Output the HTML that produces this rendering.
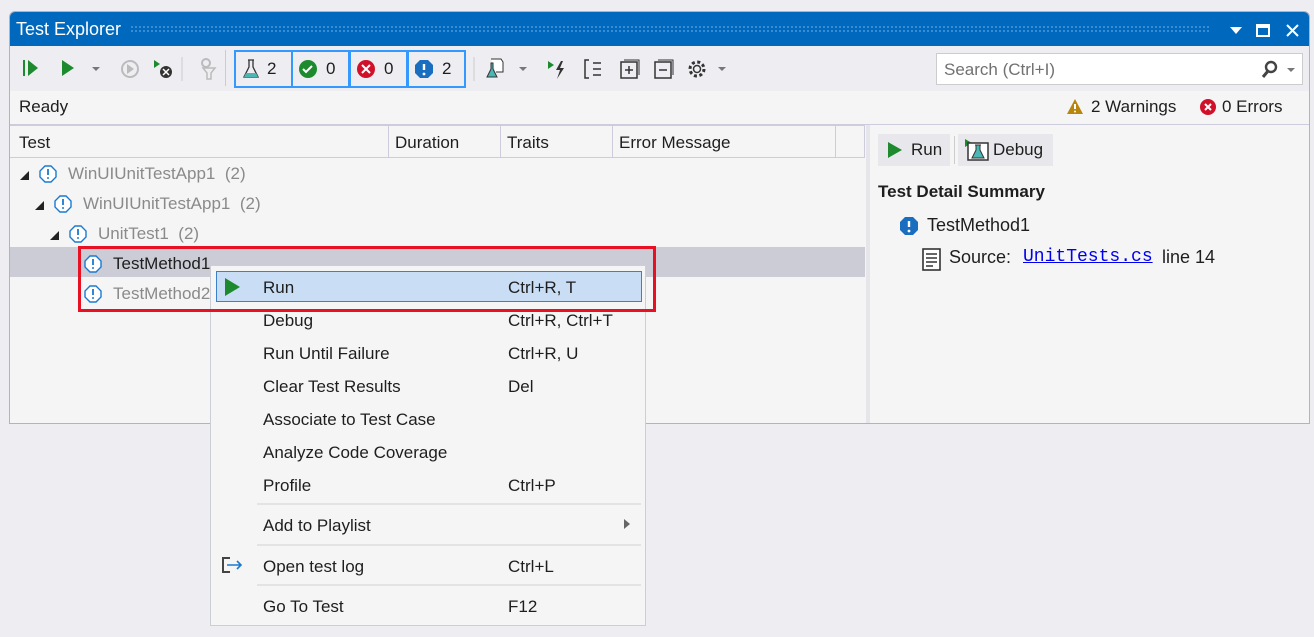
<!DOCTYPE html>
<html><head><meta charset="utf-8"><style>
*{margin:0;padding:0;box-sizing:border-box}
body{width:1314px;height:637px;background:#eeeef2;font-family:"Liberation Sans",sans-serif;font-size:17px;color:#1e1e1e;position:relative;overflow:hidden}
.a{position:absolute;white-space:nowrap}
.win{position:absolute;left:9px;top:11px;width:1301px;height:413px;border:1px solid #aeb4c3;border-radius:6px 6px 0 0;background:#f5f5f5;overflow:hidden}
.title{position:absolute;left:0;top:0;width:100%;height:34px;background:#0068bd;color:#fff}
.dots{position:absolute;left:120px;top:13px;width:1080px;height:8px;background-image:radial-gradient(#3c8fd4 1px,transparent 1.2px);background-size:4px 4px}
.tb{position:absolute;left:0;top:34px;width:100%;height:45px;background:#eeeef2}
.badge{position:absolute;top:38px;height:38px;border:2px solid #3399ff;width:59px}
.hdr{position:absolute;top:113px;left:0;width:855px;height:33px;border-bottom:1px solid #ccd;border-top:1px solid #ccd}
.vs{position:absolute;top:0;width:1px;height:32px;background:#ccd}
.g{color:#8a8a8a}
.menu{position:absolute;left:210px;top:265px;width:436px;height:361px;background:#f5f5f5;border:1px solid #ccced6}
.mi{position:absolute;left:52px}
.sc{position:absolute;left:297px}
.sep{position:absolute;left:46px;width:384px;height:2px;background:#e3e3e6}
</style></head><body>
<div class="win">
 <div class="title"><span class="a" style="left:6px;top:7px;font-size:18px">Test Explorer</span><div class="dots"></div>
  <svg class="a" style="left:1215px;top:12px" width="80" height="14"><path d="M5 3h12l-6 7z" fill="#fff"/><rect x="32" y="1" width="12" height="11" fill="none" stroke="#fff" stroke-width="2"/><rect x="32" y="1" width="12" height="3" fill="#fff"/><path d="M62 1l11 11M73 1l-11 11" stroke="#fff" stroke-width="2"/></svg>
 </div>
 <div class="tb">
  <svg class="a" style="left:10px;top:11px" width="220" height="24">
   <path d="M4 3v16" stroke="#1e8a2e" stroke-width="2"/><path d="M8 3l10 8-10 8z" fill="#1e8a2e"/>
   <path d="M42 3l12 8-12 8z" fill="#1e8a2e"/><path d="M72 10h8l-4 4z" fill="#777"/>
   <circle cx="110" cy="12" r="8" fill="none" stroke="#bbb" stroke-width="2"/><path d="M107 7l7 5-7 5z" fill="#bbb"/>
   <path d="M134 3l6 4-6 4z" fill="#1e8a2e"/><circle cx="146" cy="15" r="6" fill="#333"/><path d="M143 12l6 6M149 12l-6 6" stroke="#fff" stroke-width="1.5"/>
   <path d="M162 0v24" stroke="#ccc"/><circle cx="186" cy="6" r="4" fill="none" stroke="#bbb" stroke-width="2"/><path d="M183 11h12l-4 5v6h-4v-6z" fill="none" stroke="#bbb" stroke-width="1.5"/>
  </svg>
  <div class="a" style="left:215px;top:4px;width:1px;height:36px;background:#ccc"></div>
 </div>
 <div class="badge" style="left:224px"><svg class="a" style="left:7px;top:6px" width="16" height="22"><path d="M5 2h6M6 2v7L1 19h14L10 9V2" fill="none" stroke="#333" stroke-width="1.3"/><path d="M3 15h10l2 4H1z" fill="#4bb7b4"/></svg><span class="a" style="left:31px;top:7px">2</span></div>
 <div class="badge" style="left:281px"><svg class="a" style="left:5px;top:7px" width="20" height="20"><circle cx="10" cy="10" r="9" fill="#1e8a2e"/><path d="M5 10l3 3 6-6" stroke="#fff" stroke-width="2" fill="none"/></svg><span class="a" style="left:33px;top:7px">0</span></div>
 <div class="badge" style="left:339px"><svg class="a" style="left:5px;top:7px" width="20" height="20"><circle cx="10" cy="10" r="9" fill="#d1112a"/><path d="M6 6l8 8M14 6l-8 8" stroke="#fff" stroke-width="2"/></svg><span class="a" style="left:33px;top:7px">0</span></div>
 <div class="badge" style="left:397px"><svg class="a" style="left:5px;top:7px" width="20" height="20"><path d="M6 1h8l5 5v8l-5 5H6l-5-5V6z" fill="#1a6ec0"/><path d="M10 5v6" stroke="#fff" stroke-width="2.4"/><circle cx="10" cy="15" r="1.4" fill="#fff"/></svg><span class="a" style="left:33px;top:7px">2</span></div>
 <svg class="a" style="left:463px;top:45px" width="260" height="24">
  <path d="M1 0v24" stroke="#ccc"/>
  <path d="M18 2h10l2 3v10h-7" fill="#fff" stroke="#333"/><path d="M18 6v6l-4 8h10l-4-8V6z" fill="#4bb7b4" stroke="#333"/><path d="M46 10h8l-4 4z" fill="#777"/>
  <path d="M75 4l6 4-6 4z" fill="#1e8a2e"/><path d="M88 4l-5 9h4l-3 9 7-11h-4l3-7z" fill="#333"/>
  <path d="M116 3h-4v18h4M120 6h8M120 12h8M120 18h8" stroke="#333" stroke-width="1.5" fill="none"/>
  <rect x="148" y="5" width="16" height="16" fill="none" stroke="#333" stroke-width="1.5"/><path d="M151 3h15v15" stroke="#333" fill="none"/><path d="M156 9v8M152 13h8" stroke="#333" stroke-width="1.5"/>
  <rect x="182" y="5" width="16" height="16" fill="none" stroke="#333" stroke-width="1.5"/><path d="M185 3h15v15" stroke="#333" fill="none"/><path d="M186 13h8" stroke="#333" stroke-width="1.5"/>
  <circle cx="224" cy="12" r="7" fill="none" stroke="#333" stroke-width="3" stroke-dasharray="3 2.5"/><circle cx="224" cy="12" r="3.5" fill="none" stroke="#333" stroke-width="1.5"/>
  <path d="M245 10h8l-4 4z" fill="#777"/>
 </svg>
 <div class="a" style="left:926px;top:41px;width:367px;height:32px;background:#fff;border:1px solid #ccc"><span class="a" style="left:7px;top:6px;color:#717171">Search (Ctrl+I)</span>
  <svg class="a" style="left:324px;top:6px" width="40" height="20"><circle cx="10" cy="7" r="5" fill="none" stroke="#444" stroke-width="2.4"/><path d="M7 11l-5 6" stroke="#444" stroke-width="3"/><path d="M26 8h8l-4 4z" fill="#777"/></svg></div>
 <span class="a" style="left:9px;top:85px">Ready</span>
 <svg class="a" style="left:1056px;top:86px" width="20" height="18"><path d="M9 1l8 15H1z" fill="#b8860b"/><path d="M9 6v5" stroke="#fff" stroke-width="2"/><circle cx="9" cy="13.5" r="1" fill="#fff"/></svg>
 <span class="a" style="left:1081px;top:85px">2 Warnings</span>
 <svg class="a" style="left:1189px;top:86px" width="18" height="18"><circle cx="9" cy="9" r="8" fill="#d1112a"/><path d="M6 6l6 6M12 6l-6 6" stroke="#fff" stroke-width="2"/></svg>
 <span class="a" style="left:1212px;top:85px">0 Errors</span>
 <div class="a" style="left:0;top:112px;width:100%;height:1px;background:#ccd"></div>
 <div class="hdr"><span class="a" style="left:9px;top:7px">Test</span>
  <div class="vs" style="left:378px"></div><span class="a" style="left:385px;top:7px">Duration</span>
  <div class="vs" style="left:490px"></div><span class="a" style="left:497px;top:7px">Traits</span>
  <div class="vs" style="left:602px"></div><span class="a" style="left:609px;top:7px">Error Message</span>
  <div class="vs" style="left:825px"></div><div class="vs" style="left:854px"></div></div>
 <div class="a" style="left:856px;top:113px;width:4px;height:300px;background:#e6e6ea"></div>
 <div class="a" style="left:0;top:235px;width:855px;height:30px;background:#ccccd6"></div>
 <svg class="a" style="left:0;top:150px" width="220" height="150">
  <defs><g id="i"><path d="M5 0h6l5 5v6l-5 5H5L0 11V5z" fill="#fff" stroke="#1a7ad0" stroke-width="1.4"/><path d="M8 3v6" stroke="#1a7ad0" stroke-width="1.8"/><circle cx="8" cy="12" r="1" fill="#1a7ad0"/></g></defs>
  <path d="M10 18l9-9v9z" fill="#222"/><use href="#i" x="30" y="4"/>
  <path d="M25 48l9-9v9z" fill="#222"/><use href="#i" x="45" y="34"/>
  <path d="M40 78l9-9v9z" fill="#222"/><use href="#i" x="60" y="64"/>
  <use href="#i" x="75" y="94"/><use href="#i" x="75" y="124"/>
 </svg>
 <span class="a g" style="left:58px;top:152px">WinUIUnitTestApp1&nbsp; (2)</span>
 <span class="a g" style="left:73px;top:182px">WinUIUnitTestApp1&nbsp; (2)</span>
 <span class="a g" style="left:88px;top:212px">UnitTest1&nbsp; (2)</span>
 <span class="a" style="left:103px;top:242px">TestMethod1</span>
 <span class="a g" style="left:103px;top:272px">TestMethod2</span>
 <div class="a" style="left:868px;top:122px;width:72px;height:32px;background:#e8e8ec"></div>
 <svg class="a" style="left:876px;top:128px" width="20" height="20"><path d="M2 2l14 8-14 8z" fill="#1e8a2e"/></svg>
 <span class="a" style="left:901px;top:128px">Run</span>
 <div class="a" style="left:944px;top:124px;width:1px;height:28px;background:#ccc"></div>
 <div class="a" style="left:948px;top:122px;width:95px;height:32px;background:#e8e8ec"></div>
 <svg class="a" style="left:954px;top:126px" width="26" height="24"><path d="M1 1l7 4-7 4z" fill="#1e8a2e"/><rect x="4" y="5" width="20" height="17" fill="#fff" stroke="#333" stroke-width="1.5"/><path d="M11 7h6M12 7v5l-4 8h12l-4-8V7" fill="#4bb7b4" stroke="#333"/></svg>
 <span class="a" style="left:983px;top:128px">Debug</span>
 <span class="a" style="left:868px;top:170px;font-weight:bold">Test Detail Summary</span>
 <svg class="a" style="left:889px;top:204px" width="20" height="20"><path d="M6 1h8l5 5v8l-5 5H6l-5-5V6z" fill="#1a6ec0"/><path d="M10 5v6" stroke="#fff" stroke-width="2.4"/><circle cx="10" cy="15" r="1.4" fill="#fff"/></svg>
 <span class="a" style="left:917px;top:203px;font-size:18px">TestMethod1</span>
 <svg class="a" style="left:912px;top:236px" width="20" height="24"><rect x="1" y="1" width="17" height="21" fill="#fff" stroke="#333" stroke-width="1.6"/><path d="M4 6h11M4 10h11M4 14h11M4 18h7" stroke="#333" stroke-width="1.5"/></svg>
 <span class="a" style="left:939px;top:235px;font-size:18px">Source:</span>
 <span class="a" style="left:1013px;top:235px;font-size:18px;font-family:'Liberation Mono',monospace;color:#0000ee;text-decoration:underline">UnitTests.cs</span>
 <span class="a" style="left:1152px;top:235px;font-size:18px">line 14</span>
</div>
<div class="menu">
 <div class="a" style="left:5px;top:5px;width:426px;height:31px;background:#c9def5;border:1px solid #3b80c9"></div>
 <svg class="a" style="left:12px;top:11px" width="20" height="20"><path d="M2 1l15 9-15 9z" fill="#1e8a2e"/></svg>
 <span class="mi" style="top:12px">Run</span><span class="sc" style="top:12px">Ctrl+R, T</span>
 <span class="mi" style="top:45px">Debug</span><span class="sc" style="top:45px">Ctrl+R, Ctrl+T</span>
 <span class="mi" style="top:78px">Run Until Failure</span><span class="sc" style="top:78px">Ctrl+R, U</span>
 <span class="mi" style="top:111px">Clear Test Results</span><span class="sc" style="top:111px">Del</span>
 <span class="mi" style="top:144px">Associate to Test Case</span>
 <span class="mi" style="top:177px">Analyze Code Coverage</span>
 <span class="mi" style="top:210px">Profile</span><span class="sc" style="top:210px">Ctrl+P</span>
 <div class="sep" style="top:237px"></div>
 <span class="mi" style="top:250px">Add to Playlist</span>
 <svg class="a" style="left:412px;top:252px" width="8" height="12"><path d="M1 1l6 5-6 5z" fill="#666"/></svg>
 <div class="sep" style="top:278px"></div>
 <svg class="a" style="left:10px;top:290px" width="24" height="18"><path d="M9 2H2v14h7" fill="none" stroke="#444" stroke-width="2"/><path d="M6 9h14M16 5l4 4-4 4" fill="none" stroke="#1a7ad0" stroke-width="1.6"/></svg>
 <span class="mi" style="top:291px">Open test log</span><span class="sc" style="top:291px">Ctrl+L</span>
 <div class="sep" style="top:318px"></div>
 <span class="mi" style="top:331px">Go To Test</span><span class="sc" style="top:331px">F12</span>
</div>
<div class="a" style="left:78px;top:246px;width:578px;height:66px;border:3px solid #e81123"></div>
</body></html>
